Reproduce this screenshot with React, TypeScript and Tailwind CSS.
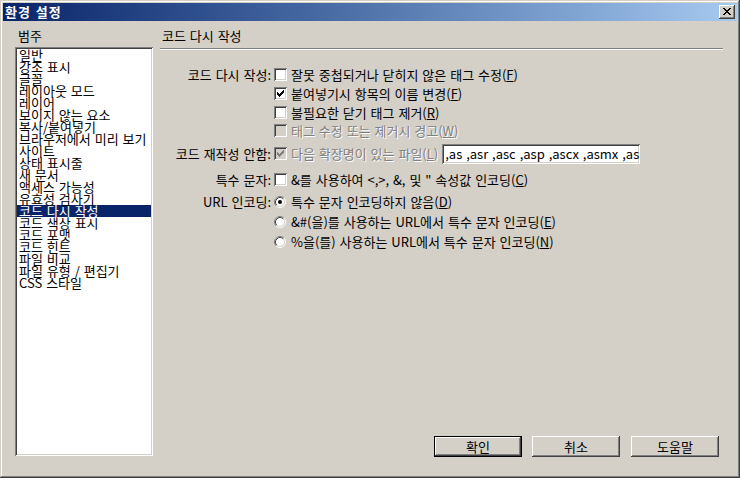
import React from "react";

const categories = [
  "일반",
  "강조 표시",
  "글꼴",
  "레이아웃 모드",
  "레이어",
  "보이지 않는 요소",
  "복사/붙여넣기",
  "브라우저에서 미리 보기",
  "사이트",
  "상태 표시줄",
  "새 문서",
  "액세스 가능성",
  "유효성 검사기",
  "코드 다시 작성",
  "코드 색상 표시",
  "코드 포맷",
  "코드 힌트",
  "파일 비교",
  "파일 유형 / 편집기",
  "CSS 스타일",
];

const SELECTED = 13;

const sunken =
  "shadow-[inset_1px_1px_#808080,inset_-1px_-1px_#ffffff,inset_2px_2px_#404040,inset_-2px_-2px_#d4d0c8]";
const raised =
  "shadow-[inset_-1px_-1px_#404040,inset_1px_1px_#ffffff,inset_-2px_-2px_#808080,inset_2px_2px_#d4d0c8]";
const disabledText = "text-[#808080] [text-shadow:1px_1px_0_#ffffff]";

// classic 7x7 check bitmap, one entry per column: [first row, rows tall]
const CHECK_COLS = [
  [2, 3],
  [3, 3],
  [4, 3],
  [3, 3],
  [2, 3],
  [1, 3],
  [0, 3],
];
const checkPath = CHECK_COLS.map(([s, h], c) => `M${3 + c} ${3 + s}h1v${h}h-1z`).join("");

// classic close glyph, rows of [x, width] runs
const CLOSE_ROWS = [
  [[0, 2], [6, 2]],
  [[1, 2], [5, 2]],
  [[2, 4]],
  [[3, 2]],
  [[2, 4]],
  [[1, 2], [5, 2]],
  [[0, 2], [6, 2]],
];
const closePath = CLOSE_ROWS.map((runs, y) => runs.map(([x, w]) => `M${4 + x} ${3 + y}h${w}v1h-${w}z`).join("")).join("");

function CheckBox({ checked, disabled }: { checked?: boolean; disabled?: boolean }) {
  return (
    <span className={`relative block w-[13px] h-[13px] shrink-0 ${disabled ? "bg-[#d4d0c8]" : "bg-white"} ${sunken}`}>
      {checked && (
        <svg width="13" height="13" className="absolute left-0 top-0" shapeRendering="crispEdges">
          <path d={checkPath} fill={disabled ? "#808080" : "#000000"} />
        </svg>
      )}
    </span>
  );
}

function Radio({ checked }: { checked?: boolean }) {
  return (
    <svg width="12" height="12" className="block shrink-0">
      <circle cx="6" cy="6" r="5" fill="#ffffff" />
      <path d="M2.11 9.89 A5.5 5.5 0 0 1 9.89 2.11" stroke="#808080" fill="none" />
      <path d="M9.89 2.11 A5.5 5.5 0 0 1 2.11 9.89" stroke="#ffffff" fill="none" />
      <path d="M2.82 9.18 A4.5 4.5 0 0 1 9.18 2.82" stroke="#404040" fill="none" />
      <path d="M9.18 2.82 A4.5 4.5 0 0 1 2.82 9.18" stroke="#d4d0c8" fill="none" />
      {checked && <circle cx="6" cy="6" r="2" fill="#000000" />}
    </svg>
  );
}

function Row({ label, className, children }: { label?: string; className: string; children: React.ReactNode }) {
  return (
    <div className={`flex items-center h-[13px] ${className}`}>
      <span className="w-[111px] text-right whitespace-nowrap">{label}</span>
      <span className="ml-[3px] flex items-center">{children}</span>
    </div>
  );
}

function Btn({ children, def }: { children: React.ReactNode; def?: boolean }) {
  return (
    <div className={`w-[88px] h-[21px] ${def ? "border border-black" : ""}`}>
      <div className={`h-full flex items-center justify-center bg-[#d4d0c8] ${raised}`}>{children}</div>
    </div>
  );
}

export default function App() {
  return (
    <div className="w-[740px] h-[478px] bg-[#d4d0c8] p-[3px] flex flex-col text-[13px] [word-spacing:1px] text-black font-['Noto_Sans_CJK_KR','Noto_Sans',sans-serif] shadow-[inset_-1px_-1px_#404040,inset_1px_1px_#d4d0c8,inset_-2px_-2px_#808080,inset_2px_2px_#ffffff] overflow-hidden">
      {/* title bar */}
      <div className="h-[18px] shrink-0 flex items-center justify-between pl-[2px] pr-[2px] bg-linear-to-r from-[#0a246a] to-[#a6caf0]">
        <span className="text-white font-bold tracking-[1px] leading-[18px]">환경 설정</span>
        <div className={`w-[16px] h-[14px] bg-[#d4d0c8] ${raised}`}>
          <svg width="16" height="14" shapeRendering="crispEdges">
            <path d={closePath} fill="#000000" />
          </svg>
        </div>
      </div>

      <div className="flex-1 flex pl-[12px] pr-[14px] pt-[8px] pb-[19px]">
        {/* category list */}
        <div className="w-[138px] flex flex-col shrink-0">
          <div className="h-[14px] leading-[14px] pl-[3px]">범주</div>
          <div className={`mt-[4px] h-[409px] bg-white p-[2px] overflow-hidden ${sunken}`}>
            {categories.map((c, i) => (
              <div
                key={c}
                className={`h-[12px] leading-[12px] pl-[2px] whitespace-nowrap ${i === SELECTED ? "bg-[#0a246a] text-white" : ""}`}
              >
                {c}
              </div>
            ))}
          </div>
        </div>

        {/* settings panel */}
        <div className="flex-1 flex flex-col ml-[7px]">
          <div className="h-[14px] leading-[14px] pl-[2px]">코드 다시 작성</div>
          <div className="mt-[5px] h-[2px] border-t border-t-[#808080] border-b border-b-white" />

          <Row label="코드 다시 작성:" className="mt-[18px]">
            <CheckBox />
            <span className="ml-[4px] whitespace-nowrap">
              잘못 중첩되거나 닫히지 않은 태그 수정(<u>F</u>)
            </span>
          </Row>
          <Row className="mt-[6px]">
            <CheckBox checked />
            <span className="ml-[4px] whitespace-nowrap">
              붙여넣기시 항목의 이름 변경(<u>F</u>)
            </span>
          </Row>
          <Row className="mt-[6px]">
            <CheckBox />
            <span className="ml-[4px] whitespace-nowrap">
              불필요한 닫기 태그 제거(<u>R</u>)
            </span>
          </Row>
          <Row className="mt-[5px]">
            <CheckBox disabled />
            <span className={`ml-[4px] whitespace-nowrap ${disabledText}`}>
              태그 수정 또는 제거시 경고(<u>W</u>)
            </span>
          </Row>
          <Row label="코드 재작성 안함:" className="mt-[10px]">
            <CheckBox checked disabled />
            <span className={`ml-[4px] whitespace-nowrap ${disabledText}`}>
              다음 확장명이 있는 파일(<u>L</u>)
            </span>
            <span className={`ml-[4px] w-[198px] h-[20px] bg-white flex items-center pl-[3px] pr-[2px] overflow-hidden whitespace-nowrap ${sunken}`}>
              ,as ,asr ,asc ,asp ,ascx ,asmx ,aspx ,cfc ,cfm ,config ,cs
            </span>
          </Row>
          <Row label="특수 문자:" className="mt-[13px]">
            <CheckBox />
            <span className="ml-[4px] whitespace-nowrap">
              {'&를 사용하여 <,>, &, 및 " 속성값 인코딩('}
              <u>C</u>)
            </span>
          </Row>
          <Row label="URL 인코딩:" className="mt-[9px]">
            <Radio checked />
            <span className="ml-[5px] whitespace-nowrap">
              특수 문자 인코딩하지 않음(<u>D</u>)
            </span>
          </Row>
          <Row className="mt-[7px]">
            <Radio />
            <span className="ml-[5px] whitespace-nowrap">
              {"&#(을)를 사용하는 URL에서 특수 문자 인코딩("}
              <u>E</u>)
            </span>
          </Row>
          <Row className="mt-[7px]">
            <Radio />
            <span className="ml-[5px] whitespace-nowrap">
              %을(를) 사용하는 URL에서 특수 문자 인코딩(<u>N</u>)
            </span>
          </Row>

          <div className="flex-1" />
          <div className="flex justify-end pr-[4px] mb-[-1px]">
            <Btn def>확인</Btn>
            <div className="ml-[10px]">
              <Btn>취소</Btn>
            </div>
            <div className="ml-[11px]">
              <Btn>도움말</Btn>
            </div>
          </div>
        </div>
      </div>
    </div>
  );
}
